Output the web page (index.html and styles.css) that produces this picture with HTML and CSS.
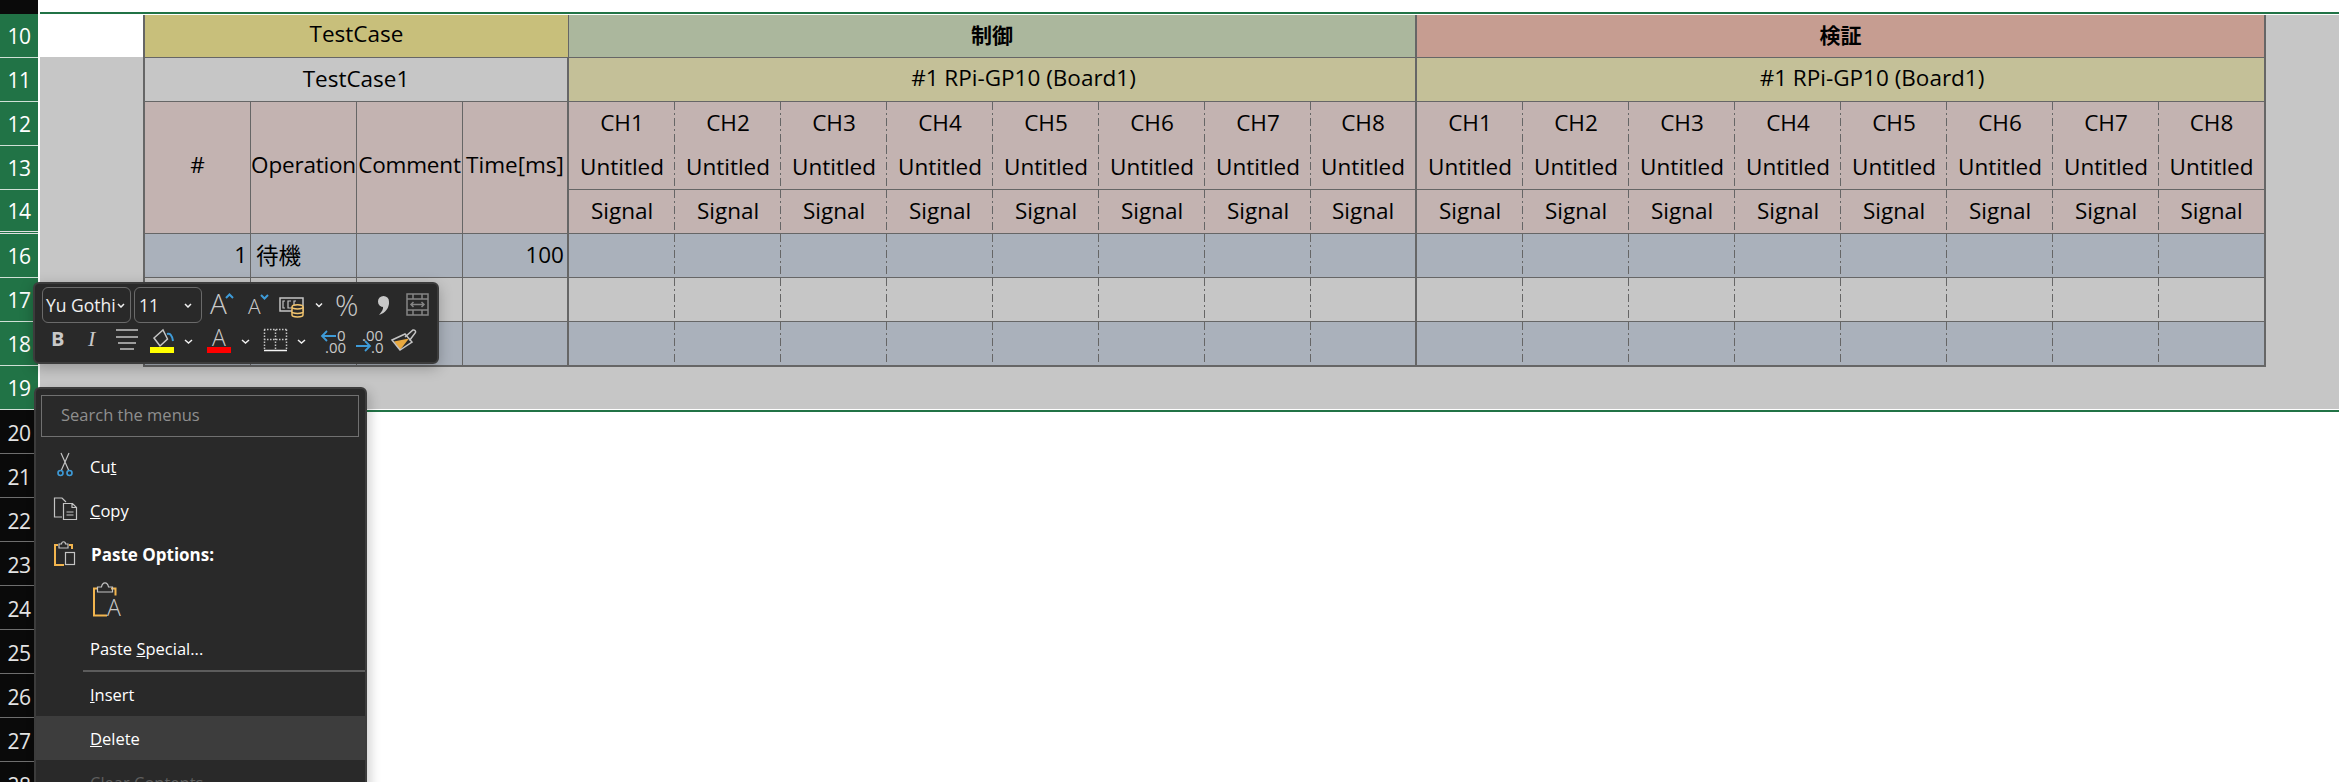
FILE: index.html
```html
<!DOCTYPE html>
<html lang="en">
<head>
<meta charset="UTF-8">
<meta name="viewport" content="width=device-width, initial-scale=1.0">
<title>TestCase sheet</title>
<link rel="stylesheet" href="styles.css">
</head>
<body>
    <div class="page">
        <div class="gutter">
            <div class="gutter-top"></div>
            <div class="row-no first">10</div>
            <div class="row-no">11</div>
            <div class="row-no">12</div>
            <div class="row-no">13</div>
            <div class="row-no hidden-next">14</div>
            <div class="row-no">16</div>
            <div class="row-no">17</div>
            <div class="row-no">18</div>
            <div class="row-no">19</div>
            <div class="row-no dark">20</div>
            <div class="row-no dark">21</div>
            <div class="row-no dark">22</div>
            <div class="row-no dark">23</div>
            <div class="row-no dark">24</div>
            <div class="row-no dark">25</div>
            <div class="row-no dark">26</div>
            <div class="row-no dark">27</div>
            <div class="row-no dark">28</div>
        </div>

        <div class="sheet">
            <div class="frame-line top"></div>
            <div class="frame">
                <div class="frame-left"><div class="corner"></div></div>
                <div class="table">
                    <div class="cell c-yellow head span4">TestCase</div>
                    <div class="cell c-green head span8 thick strong">制御</div>
                    <div class="cell c-red head span8 strong">検証</div>

                    <div class="cell c-gray span4 thick">TestCase1</div>
                    <div class="cell c-board span8 thick">#1 RPi-GP10 (Board1)</div>
                    <div class="cell c-board span8">#1 RPi-GP10 (Board1)</div>

                    <div class="cell c-rose tall">#</div>
                    <div class="cell c-rose tall tight">Operation</div>
                    <div class="cell c-rose tall tight">Comment</div>
                    <div class="cell c-rose tall thick">Time[ms]</div>

                    <div class="cell c-rose ch no-line">CH1</div>
                    <div class="cell c-rose ch no-line">CH2</div>
                    <div class="cell c-rose ch no-line">CH3</div>
                    <div class="cell c-rose ch no-line">CH4</div>
                    <div class="cell c-rose ch no-line">CH5</div>
                    <div class="cell c-rose ch no-line">CH6</div>
                    <div class="cell c-rose ch no-line">CH7</div>
                    <div class="cell c-rose no-line thick">CH8</div>
                    <div class="cell c-rose ch no-line">CH1</div>
                    <div class="cell c-rose ch no-line">CH2</div>
                    <div class="cell c-rose ch no-line">CH3</div>
                    <div class="cell c-rose ch no-line">CH4</div>
                    <div class="cell c-rose ch no-line">CH5</div>
                    <div class="cell c-rose ch no-line">CH6</div>
                    <div class="cell c-rose ch no-line">CH7</div>
                    <div class="cell c-rose no-line">CH8</div>

                    <div class="cell c-rose ch">Untitled</div>
                    <div class="cell c-rose ch">Untitled</div>
                    <div class="cell c-rose ch">Untitled</div>
                    <div class="cell c-rose ch">Untitled</div>
                    <div class="cell c-rose ch">Untitled</div>
                    <div class="cell c-rose ch">Untitled</div>
                    <div class="cell c-rose ch">Untitled</div>
                    <div class="cell c-rose thick">Untitled</div>
                    <div class="cell c-rose ch">Untitled</div>
                    <div class="cell c-rose ch">Untitled</div>
                    <div class="cell c-rose ch">Untitled</div>
                    <div class="cell c-rose ch">Untitled</div>
                    <div class="cell c-rose ch">Untitled</div>
                    <div class="cell c-rose ch">Untitled</div>
                    <div class="cell c-rose ch">Untitled</div>
                    <div class="cell c-rose">Untitled</div>

                    <div class="cell c-rose ch">Signal</div>
                    <div class="cell c-rose ch">Signal</div>
                    <div class="cell c-rose ch">Signal</div>
                    <div class="cell c-rose ch">Signal</div>
                    <div class="cell c-rose ch">Signal</div>
                    <div class="cell c-rose ch">Signal</div>
                    <div class="cell c-rose ch">Signal</div>
                    <div class="cell c-rose thick">Signal</div>
                    <div class="cell c-rose ch">Signal</div>
                    <div class="cell c-rose ch">Signal</div>
                    <div class="cell c-rose ch">Signal</div>
                    <div class="cell c-rose ch">Signal</div>
                    <div class="cell c-rose ch">Signal</div>
                    <div class="cell c-rose ch">Signal</div>
                    <div class="cell c-rose ch">Signal</div>
                    <div class="cell c-rose">Signal</div>

                    <!-- data rows -->
                    <div class="cell c-blue right">1</div>
                    <div class="cell c-blue left">待機</div>
                    <div class="cell c-blue"></div>
                    <div class="cell c-blue right thick">100</div>
                    <div class="cell c-blue ch"></div><div class="cell c-blue ch"></div><div class="cell c-blue ch"></div><div class="cell c-blue ch"></div>
                    <div class="cell c-blue ch"></div><div class="cell c-blue ch"></div><div class="cell c-blue ch"></div><div class="cell c-blue thick"></div>
                    <div class="cell c-blue ch"></div><div class="cell c-blue ch"></div><div class="cell c-blue ch"></div><div class="cell c-blue ch"></div>
                    <div class="cell c-blue ch"></div><div class="cell c-blue ch"></div><div class="cell c-blue ch"></div><div class="cell c-blue"></div>

                    <div class="cell c-gray"></div>
                    <div class="cell c-gray"></div>
                    <div class="cell c-gray"></div>
                    <div class="cell c-gray thick"></div>
                    <div class="cell c-gray ch"></div><div class="cell c-gray ch"></div><div class="cell c-gray ch"></div><div class="cell c-gray ch"></div>
                    <div class="cell c-gray ch"></div><div class="cell c-gray ch"></div><div class="cell c-gray ch"></div><div class="cell c-gray thick"></div>
                    <div class="cell c-gray ch"></div><div class="cell c-gray ch"></div><div class="cell c-gray ch"></div><div class="cell c-gray ch"></div>
                    <div class="cell c-gray ch"></div><div class="cell c-gray ch"></div><div class="cell c-gray ch"></div><div class="cell c-gray"></div>

                    <div class="cell c-blue"></div>
                    <div class="cell c-blue"></div>
                    <div class="cell c-blue"></div>
                    <div class="cell c-blue thick"></div>
                    <div class="cell c-blue ch"></div><div class="cell c-blue ch"></div><div class="cell c-blue ch"></div><div class="cell c-blue ch"></div>
                    <div class="cell c-blue ch"></div><div class="cell c-blue ch"></div><div class="cell c-blue ch"></div><div class="cell c-blue thick"></div>
                    <div class="cell c-blue ch"></div><div class="cell c-blue ch"></div><div class="cell c-blue ch"></div><div class="cell c-blue ch"></div>
                    <div class="cell c-blue ch"></div><div class="cell c-blue ch"></div><div class="cell c-blue ch"></div><div class="cell c-blue"></div>
                </div>
            </div>
            <div class="frame-line bottom"></div>
        </div>
    </div>

    <!-- floating mini toolbar -->
    <div class="mini-bar">
        <div class="mini-row">
            <div class="mini-select font-select"><span>Yu Gothi</span><svg class="chev" viewBox="0 0 8 5"><polyline points="1,1 4,4 7,1"/></svg></div>
            <div class="mini-select size-select"><span>11</span><svg class="chev" viewBox="0 0 8 5"><polyline points="1,1 4,4 7,1"/></svg></div>
            <svg class="strip-top" width="230" height="36" viewBox="0 0 230 36">
                <text class="ico-text light" x="6" y="27" font-size="28">A</text>
                <polyline class="ico-blue" points="22,11 25.5,7.5 29,11"/>
                <text class="ico-text light" x="44" y="27" font-size="21">A</text>
                <polyline class="ico-blue" points="57,8 60.5,11.5 64,8"/>
                <!-- number format -->
                <rect class="ico-gray" x="76" y="11" width="23" height="13"/>
                <path class="ico-gray thin" d="M81 14h-2v7h2M87 14h-3v7h3M92 14h-2v7h2"/>
                <path class="ico-yellow" d="M88 20c0-3 11-3 11 0v8c0 2.500-11 2.500-11 0z"/>
                <path class="ico-yellow" d="M88 20c0 2.500 11 2.500 11 0M88 24.500c0 2.500 11 2.500 11 0"/>
                <polyline class="ico-white" points="112,16.500 115,19.500 118,16.500"/>
                <text class="ico-text light" x="131" y="29" font-size="29">%</text>
                <!-- comma style -->
                <circle class="ico-fill" cx="179.500" cy="14.500" r="5.500"/>
                <path class="ico-fill" d="M185 14.500c.5 6-3.500 11.500-10 13.500 3-3.500 4.500-6 4-8z"/>
                <!-- merge -->
                <rect class="ico-dim" x="203" y="7" width="21" height="21"/>
                <path class="ico-dim" d="M203 12h21M203 23h21M209 7v5M218 7v5M209 23v5M218 23v5"/>
                <path class="ico-dim" d="M207 17.500h13M209.500 15l-2.500 2.500 2.500 2.500M217.500 15l2.500 2.500-2.500 2.500"/>
            </svg>
        </div>
        <svg class="strip-bottom" width="390" height="32" viewBox="0 0 390 32">
            <text class="ico-text bold" x="9" y="20" font-size="20">B</text>
            <text class="ico-serif" x="46" y="20" font-size="22">I</text>
            <path class="ico-gray" d="M74 4h22M74 11h22M76 17h18M78 23h14"/>
            <!-- fill colour -->
            <path class="ico-gray" d="M112 12l9-8 4.500 9-7.500 7z"/>
            <path class="ico-blue" d="M125 8c3-1 5 1 6 7"/>
            <rect class="bar-yellow" x="108" y="21" width="24" height="6"/>
            <polyline class="ico-white" points="143,14 146.500,17 150,14"/>
            <!-- font colour -->
            <text class="ico-text light" x="170" y="20" font-size="23">A</text>
            <rect class="bar-red" x="165" y="21" width="24" height="6"/>
            <polyline class="ico-white" points="200,14 203.500,17 207,14"/>
            <!-- borders -->
            <path class="ico-dots" d="M222 3.500h23M222.500 3.500v20M244.500 3.500v20M233.500 3.500v20M222 13.500h23"/>
            <path class="ico-white-line" d="M222 24.500h23"/>
            <polyline class="ico-white" points="256,14 259.500,17 263,14"/>
            <!-- decrease decimal -->
            <path class="ico-arrow" d="M280 10h14M285 5l-5 5 5 5"/>
            <text class="ico-text" x="295" y="15" font-size="15">0</text>
            <text class="ico-text" x="283" y="27" font-size="15">.00</text>
            <!-- increase decimal -->
            <text class="ico-text" x="320" y="15" font-size="15">.00</text>
            <path class="ico-arrow" d="M314 20h14M323 15l5 5-5 5"/>
            <text class="ico-text" x="329" y="27" font-size="15">.0</text>
            <!-- format painter -->
            <path class="brush-fill" d="M352 15.500l15-3-9 11.500z"/>
            <path class="ico-gray" d="M350 14l13-6 7 8-12 8z"/>
            <path class="ico-gray" d="M363 11l8-7c1.500-.5 3 1 2.500 2.500l-6 8"/>
        </svg>
    </div>

    <!-- context menu -->
    <div class="menu">
        <div class="menu-search">Search the menus</div>
        <div class="menu-item cut">
            <svg class="menu-ico" width="24" height="26" viewBox="0 0 24 26">
                <path class="ico-gray thin" d="M8 1l8 18M16 1L8 19"/>
                <circle class="ico-blue-thin" cx="7.500" cy="21" r="2.500"/>
                <circle class="ico-blue-thin" cx="16.500" cy="21" r="2.500"/>
            </svg>
            <span class="menu-label">Cu<u>t</u></span>
        </div>
        <div class="menu-item">
            <svg class="menu-ico" width="26" height="26" viewBox="0 0 26 26">
                <path class="ico-gray thin" d="M9 21H1.500V2H9l4 4"/>
                <path class="ico-gray thin" d="M10.500 7.500v16h13V11.500l-4-4zM19 7.500v4h4.500"/>
                <path class="ico-gray thin" d="M13.500 16h7M13.500 19h7"/>
            </svg>
            <span class="menu-label"><u>C</u>opy</span>
        </div>
        <div class="menu-item">
            <svg class="menu-ico" width="26" height="26" viewBox="0 0 26 26">
                <path class="ico-orange" d="M5 5H2v20h9"/>
                <path class="ico-orange" d="M16 5h3v4"/>
                <path class="ico-gray thin" d="M6 8V4h2.500c0-3 4-3 4 0H15v4z"/>
                <rect class="ico-gray thin" x="12.500" y="12.500" width="9" height="12"/>
            </svg>
            <span class="menu-label strong">Paste Options:</span>
        </div>
        <div class="paste-row">
            <svg width="30" height="38" viewBox="0 0 30 38">
                <path class="ico-orange" d="M5 7.500H2v27h13"/>
                <path class="ico-orange" d="M19 7.500h4.500v7"/>
                <path class="ico-gray thin" d="M5.500 11V6h4c1-5.500 6-5.500 7 0h4v5z"/>
                <text class="ico-text light" x="15" y="35" font-size="23">A</text>
            </svg>
        </div>
        <div class="menu-item">
            <span class="menu-label">Paste <u>S</u>pecial...</span>
        </div>
        <div class="menu-sep"></div>
        <div class="menu-item">
            <span class="menu-label"><u>I</u>nsert</span>
        </div>
        <div class="menu-item active">
            <span class="menu-label"><u>D</u>elete</span>
        </div>
        <div class="menu-item disabled">
            <span class="menu-label">Clear Co<u>n</u>tents</span>
        </div>
    </div>
</body>
</html>
```

FILE: styles.css
```css
body {
    margin: 0;
    background: #fff;
    font-family: "Open Sans", "Noto Sans CJK JP", sans-serif;
    overflow: hidden;
}

.page {
    display: flex;
    width: 2339px;
    height: 782px;
    overflow: hidden;
}

/* row numbers */
.gutter {
    flex: 0 0 38px;
    margin-right: 2px;
    background: #0a0a0a;
}

.gutter-top {
    height: 14px;
    background: #0a0a0a;
}

.row-no {
    box-sizing: border-box;
    height: 44px;
    display: flex;
    align-items: center;
    justify-content: center;
    background: #217346;
    color: #fff;
    font-size: 21px;
    border-bottom: 1px solid #cfe0d6;
    letter-spacing: -0.5px;
}

.row-no.hidden-next {
    border-bottom: 3px double #e0e0e0;
}

.row-no.dark {
    padding-top: 2px;
    background: #0a0a0a;
    color: #e4e4e4;
    border-bottom: 1px solid #6e6e6e;
}

/* sheet */
.sheet {
    flex: 1;
    min-width: 0;
}

.frame-line {
    height: 2px;
    background: #217346;
}

.frame-line.top {
    margin-top: 12px;
}

.frame-line.bottom {
    margin-top: 1px;
}

.frame {
    display: flex;
    margin-top: 1px;
    height: 394px;
    background: #c6c6c6;
}

.frame-left {
    flex: 0 0 103px;
}

.corner {
    height: 42px;
    background: #fff;
}

.table {
    display: grid;
    grid-template-columns: repeat(20, 106px);
    grid-template-rows: 43px repeat(7, 44px);
    align-self: flex-start;
    border-left: 2px solid #666;
    border-right: 1px solid #666;
    border-bottom: 1px solid #666;
}

.cell {
    box-sizing: border-box;
    display: flex;
    align-items: center;
    justify-content: center;
    min-width: 0;
    padding-bottom: 3px;
    border-right: 1px solid #666;
    border-bottom: 1px solid #666;
    color: #000;
    font-size: 22.5px;
    white-space: nowrap;
}

.span4 { grid-column: span 4; }
.span8 { grid-column: span 8; }

.head {
    padding-bottom: 5px;
}

.tall {
    grid-row: span 3;
    padding-bottom: 6px;
}

.tight {
    letter-spacing: -0.2px;
}

.thick {
    border-right-width: 2px;
}

.strong {
    font-size: 21px;
    font-weight: 700;
}

.no-line {
    border-bottom: none;
}

/* channel columns have a dash-dot line instead of a solid one */
.ch {
    border-right: none;
    background-image: repeating-linear-gradient(to bottom, #666 0 8px, transparent 8px 11px, #666 11px 13px, transparent 13px 16px);
    background-size: 1px 100%;
    background-position: right top;
    background-repeat: no-repeat;
}

.right {
    justify-content: flex-end;
    padding-right: 3px;
}

.left {
    justify-content: flex-start;
    padding-left: 5px;
}

.c-yellow { background-color: #c8bf7b; }
.c-green { background-color: #abb79d; }
.c-red { background-color: #c69d91; }
.c-gray { background-color: #c6c6c6; }
.c-rose { background-color: #c3b3b1; }
.c-blue { background-color: #aab1bb; }

/* the board title sits right of the cell's centre */
.c-board {
    padding-left: 63px;
    padding-bottom: 4px;
    background-color: #c4c098;
}

/* mini toolbar */
.mini-bar {
    position: absolute;
    left: 33px;
    top: 282px;
    box-sizing: border-box;
    width: 406px;
    height: 82px;
    padding: 3px 7px;
    background: #292929;
    border: 2px solid #3c3c3c;
    border-radius: 6px;
    box-shadow: 0 4px 14px rgba(0, 0, 0, 0.25);
}

.mini-row {
    display: flex;
    align-items: flex-start;
    gap: 3px;
}

.mini-select {
    box-sizing: border-box;
    flex: none;
    display: flex;
    align-items: center;
    justify-content: space-between;
    height: 36px;
    padding: 0 5px 0 3px;
    border: 1px solid #6a6a6a;
    border-radius: 6px;
    color: #f0f0f0;
    font-size: 17.5px;
    white-space: nowrap;
}

.font-select { width: 89px; }
.size-select { width: 68px; padding-left: 4px; padding-right: 9px; }

.chev {
    flex: none;
    width: 8px;
    height: 5px;
    fill: none;
    stroke: #f0f0f0;
    stroke-width: 1.5;
}

.strip-top {
    display: block;
    flex: none;
    margin-left: -1px;
}

.strip-bottom {
    display: block;
    margin-top: 3px;
}

.ico-text {
    fill: #c8c8c8;
    font-family: "Open Sans", sans-serif;
}

.ico-text.light { font-weight: 300; }
.ico-text.bold { font-weight: 700; }

.ico-serif {
    fill: #c8c8c8;
    font-family: "Liberation Serif", serif;
    font-style: italic;
}

.ico-gray,
.ico-yellow,
.ico-blue,
.ico-white,
.ico-dim,
.ico-dots,
.ico-white-line,
.ico-arrow,
.ico-orange,
.ico-blue-thin {
    fill: none;
}

.ico-gray { stroke: #c4c4c4; stroke-width: 1.5; }
.ico-gray.thin { stroke-width: 1.2; }
.ico-yellow { stroke: #f2c46d; stroke-width: 1.5; fill: #292929; }
.ico-blue { stroke: #3e9bd8; stroke-width: 2; }
.ico-white { stroke: #f0f0f0; stroke-width: 1.5; }
.ico-dim { stroke: #858585; stroke-width: 1.5; }
.ico-dots { stroke: #c4c4c4; stroke-width: 1.5; stroke-dasharray: 1.5 1.5; }
.ico-white-line { stroke: #f4f4f4; stroke-width: 1.5; }
.ico-arrow { stroke: #3e9bd8; stroke-width: 1.8; }
.ico-orange { stroke: #f2b54e; stroke-width: 2; }
.ico-blue-thin { stroke: #3e9bd8; stroke-width: 1.6; }
.ico-fill { fill: #c8c8c8; }
.bar-yellow { fill: #ffff00; }
.bar-red { fill: #ff0000; }
.brush-fill { fill: #e9a93f; }

/* context menu */
.menu {
    position: absolute;
    left: 34px;
    top: 387px;
    box-sizing: border-box;
    width: 333px;
    height: 420px;
    padding-top: 6px;
    background: #292929;
    border: 2px solid #3c3c3c;
    border-radius: 6px 6px 0 0;
    box-shadow: 3px 4px 12px rgba(0, 0, 0, 0.2);
}

.menu-search {
    box-sizing: border-box;
    height: 42px;
    margin: 0 6px 0 5px;
    padding: 0 0 3px 19px;
    display: flex;
    align-items: center;
    border: 1px solid #707070;
    color: #8f8f8f;
    font-size: 16.5px;
}

.menu-item {
    position: relative;
    box-sizing: border-box;
    height: 44px;
    display: flex;
    align-items: center;
    padding-left: 54px;
    color: #fff;
    font-size: 16.5px;
}

.menu-item.cut {
    margin-top: 7px;
}

.menu-item.active {
    background: #3d3d3d;
}

.menu-item.disabled {
    color: #5e5e5e;
}

.menu-label.strong {
    font-weight: 700;
    font-size: 17px;
    margin-left: 1px;
}

.menu-ico {
    position: absolute;
    left: 17px;
    top: 8px;
}

.paste-row {
    height: 50px;
    padding-left: 56px;
    box-sizing: border-box;
    padding-top: 5px;
}

.paste-row svg {
    display: block;
}

.menu-sep {
    height: 2px;
    margin-left: 47px;
    background: #5c5c5c;
}
```
